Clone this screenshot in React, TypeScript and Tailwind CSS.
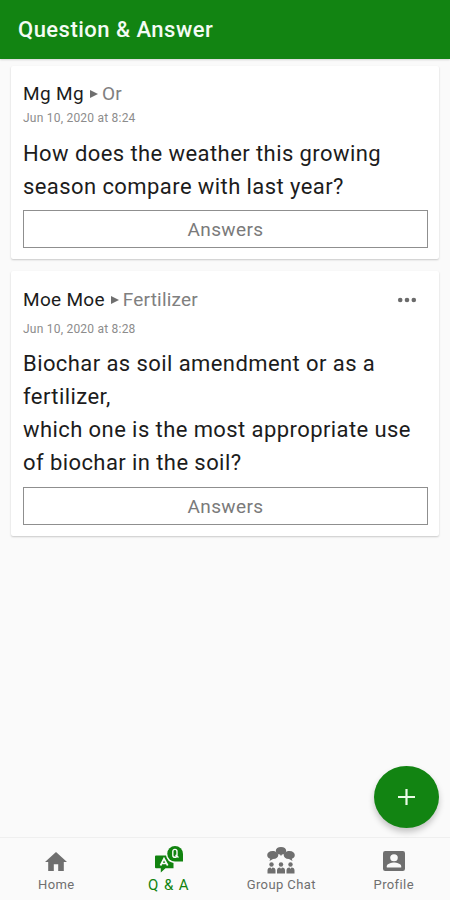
import type { ReactNode } from 'react';
import { clsx } from 'clsx';

type Question = {
    author: string;
    topic: string;
    date: string;
    lines: string[];
    own?: boolean;
};

const questions: Question[] = [
    {
        author: 'Mg Mg',
        topic: 'Or',
        date: 'Jun 10, 2020 at 8:24',
        lines: ['How does the weather this growing', 'season compare with last year?'],
    },
    {
        author: 'Moe Moe',
        topic: 'Fertilizer',
        date: 'Jun 10, 2020 at 8:28',
        lines: ['Biochar as soil amendment or as a', 'fertilizer,', 'which one is the most appropriate use', 'of biochar in the soil?'],
        own: true,
    },
];

function HomeIcon() {
    return (
        <svg width="22" height="19" viewBox="0 0 22 19" fill="currentColor">
            <path d="M8.8 19v-6.8h4.4V19h5.6V10H22L11 0 0 10h3.2v9z" />
        </svg>
    );
}

function QaIcon() {
    return (
        <svg className="-mt-[3px]" width="28" height="27" viewBox="0 0 28 27" fill="currentColor">
            <path d="M1 9.500h10A9.500 9.500 0 0 0 18.500 17v5.200H10.500L5.800 26.500V22.200H1a1 1 0 0 1-1-1V10.500a1 1 0 0 1 1-1z" />
            <path d="M20 0a8 8 0 0 1 8 8v7.500h-8A7.750 7.750 0 0 1 20 0z" />
            <g fill="none" stroke="#fafafa" strokeWidth="1.700">
                <path d="M5.500 19.500l3.500-7 3.700 7M6.800 17.500h4.700" />
                <path d="M17.800 5.500a2.100 2.100 0 0 1 4.200 0v3.700a2.100 2.100 0 0 1-4.200 0zM20.500 9l3 2.500" strokeWidth="1.400" />
            </g>
        </svg>
    );
}

function GroupIcon() {
    return (
        <svg className="-mt-px" width="28" height="27" viewBox="0 0 28 27" fill="currentColor">
            <path d="M5.500 4C2.300 4 .2 5.700.2 8s1.400 3.400 3 3.800L2.500 14l3.500-2c3.500 0 5.300-1.800 5.300-4S8.800 4 5.500 4z" />
            <path d="M22.500 4c3.200 0 5.300 1.700 5.300 4s-1.400 3.400-3 3.800l.7 2.200-3.500-2c-3.500 0-5.300-1.800-5.300-4s2.500-4 5.800-4z" />
            <path d="M14 0c3.200 0 5.200 1.500 5.200 3.700S17 7.500 15 7.600L14 9l-1-1.400c-2-.1-4.200-1.700-4.200-3.900S10.800 0 14 0z" />
            {[4.500, 14, 23.500].map((x) => (
                <g key={x}>
                    <circle cx={x} cy="17.500" r="2.200" />
                    <path d={`M${x - 4} 26.500v-3q0-3 3-3l1 1.200 1-1.200q3 0 3 3v3z`} />
                </g>
            ))}
        </svg>
    );
}

function ProfileIcon() {
    return (
        <svg width="22" height="20" viewBox="0 0 22 20" fill="currentColor">
            <rect width="22" height="20" rx="2.200" />
            <g fill="#fafafa">
                <ellipse cx="11" cy="6.700" rx="3.800" ry="3.500" />
                <path d="M3.800 16.500v-1.300c0-2.500 4.800-3.700 7.200-3.700s7.200 1.200 7.200 3.700v1.300z" />
            </g>
        </svg>
    );
}

function QuestionCard({ author, topic, date, lines, own }: Question) {
    return (
        <article className={clsx('mx-[11px] rounded-[2px] bg-white px-3 pb-[11px] shadow-[0_1px_2px_rgba(0,0,0,0.2)]', own ? 'pt-[17px]' : 'pt-4')}>
            <header className="flex h-6 items-center text-[19px] leading-6">
                <span className={clsx('whitespace-nowrap text-[#1c1c1c]', own ? 'tracking-[0.3px]' : 'tracking-[0.35px]')}>{author}</span>
                <svg className="ml-[6px] mr-1" width="8" height="8" viewBox="0 0 8 8" fill="#6f6f6f">
                    <path d="M0 0l8 4-8 4z" />
                </svg>
                <span className="tracking-[0.2px] text-[#808080]">{topic}</span>
                {own && (
                    <button className="ml-auto mr-[10px]" aria-label="More">
                        <svg width="20" height="6" viewBox="0 0 20 6" fill="#6b6b6b">
                            <circle cx="3.200" cy="3" r="2.300" />
                            <circle cx="10" cy="3" r="2.300" />
                            <circle cx="16.800" cy="3" r="2.300" />
                        </svg>
                    </button>
                )}
            </header>
            <p className={clsx('text-[12px] leading-4 tracking-[0.22px] text-[#8c8c8c]', own ? 'mt-[9px] mb-[10px]' : 'mt-1 mb-[11px]')}>{date}</p>
            <div className="text-[22px] leading-[33px] tracking-[0.42px] text-[#1c1c1c]">
                {lines.map((line) => (
                    <p key={line} className="whitespace-nowrap">{line}</p>
                ))}
            </div>
            <button className={clsx('flex h-[38px] w-[405px] items-center justify-center border border-[#8f8f8f] pt-[2px] text-[19px] tracking-[0.4px] text-[#7a7a7a]', own ? 'mt-2' : 'mt-[7px]')}>
                Answers
            </button>
        </article>
    );
}

function Tab({ icon, label, active }: { icon: ReactNode; label: string; active?: boolean }) {
    return (
        <button className={clsx('flex flex-1 flex-col items-center', active ? 'text-[#11830f]' : 'text-[#6f6f6f]')}>
            <span className="flex h-[37px] items-center pt-[9px]">{icon}</span>
            <span className={clsx('whitespace-nowrap leading-5', active ? 'text-[15px] tracking-[0.9px]' : 'text-[13px] tracking-[0.4px]')}>{label}</span>
        </button>
    );
}

export default function App() {
    return (
        <div className="relative flex h-[900px] w-[450px] flex-col overflow-hidden bg-[#fafafa] font-['Roboto',sans-serif]">
            <header className="flex h-[59px] shrink-0 items-center bg-[#128412] pl-[18px] shadow-[0_1px_2px_rgba(0,0,0,0.15)]">
                <h1 className="whitespace-nowrap text-[22px] font-medium tracking-[0.48px] text-[#f4fbf4]">Question &amp; Answer</h1>
            </header>
            <main className="flex flex-1 flex-col gap-3 pt-[7px]">
                {questions.map((q) => (
                    <QuestionCard key={q.date} {...q} />
                ))}
            </main>
            <button className="absolute left-[374px] top-[766px] flex h-[62px] w-[65px] items-center justify-center rounded-[50%] bg-[#128412] shadow-[0_4px_6px_rgba(0,0,0,0.22)]" aria-label="Ask">
                <svg width="17" height="16" viewBox="0 0 17 16" fill="none" stroke="#eafbe6" strokeWidth="2.200">
                    <path d="M8.500 0v16M0 8h17" />
                </svg>
            </button>
            <nav className="flex h-[63px] shrink-0 border-t border-[#efefef] bg-[#fafafa]">
                <Tab icon={<HomeIcon />} label="Home" />
                <Tab icon={<QaIcon />} label="Q &amp; A" active />
                <Tab icon={<GroupIcon />} label="Group Chat" />
                <Tab icon={<ProfileIcon />} label="Profile" />
            </nav>
        </div>
    );
}
